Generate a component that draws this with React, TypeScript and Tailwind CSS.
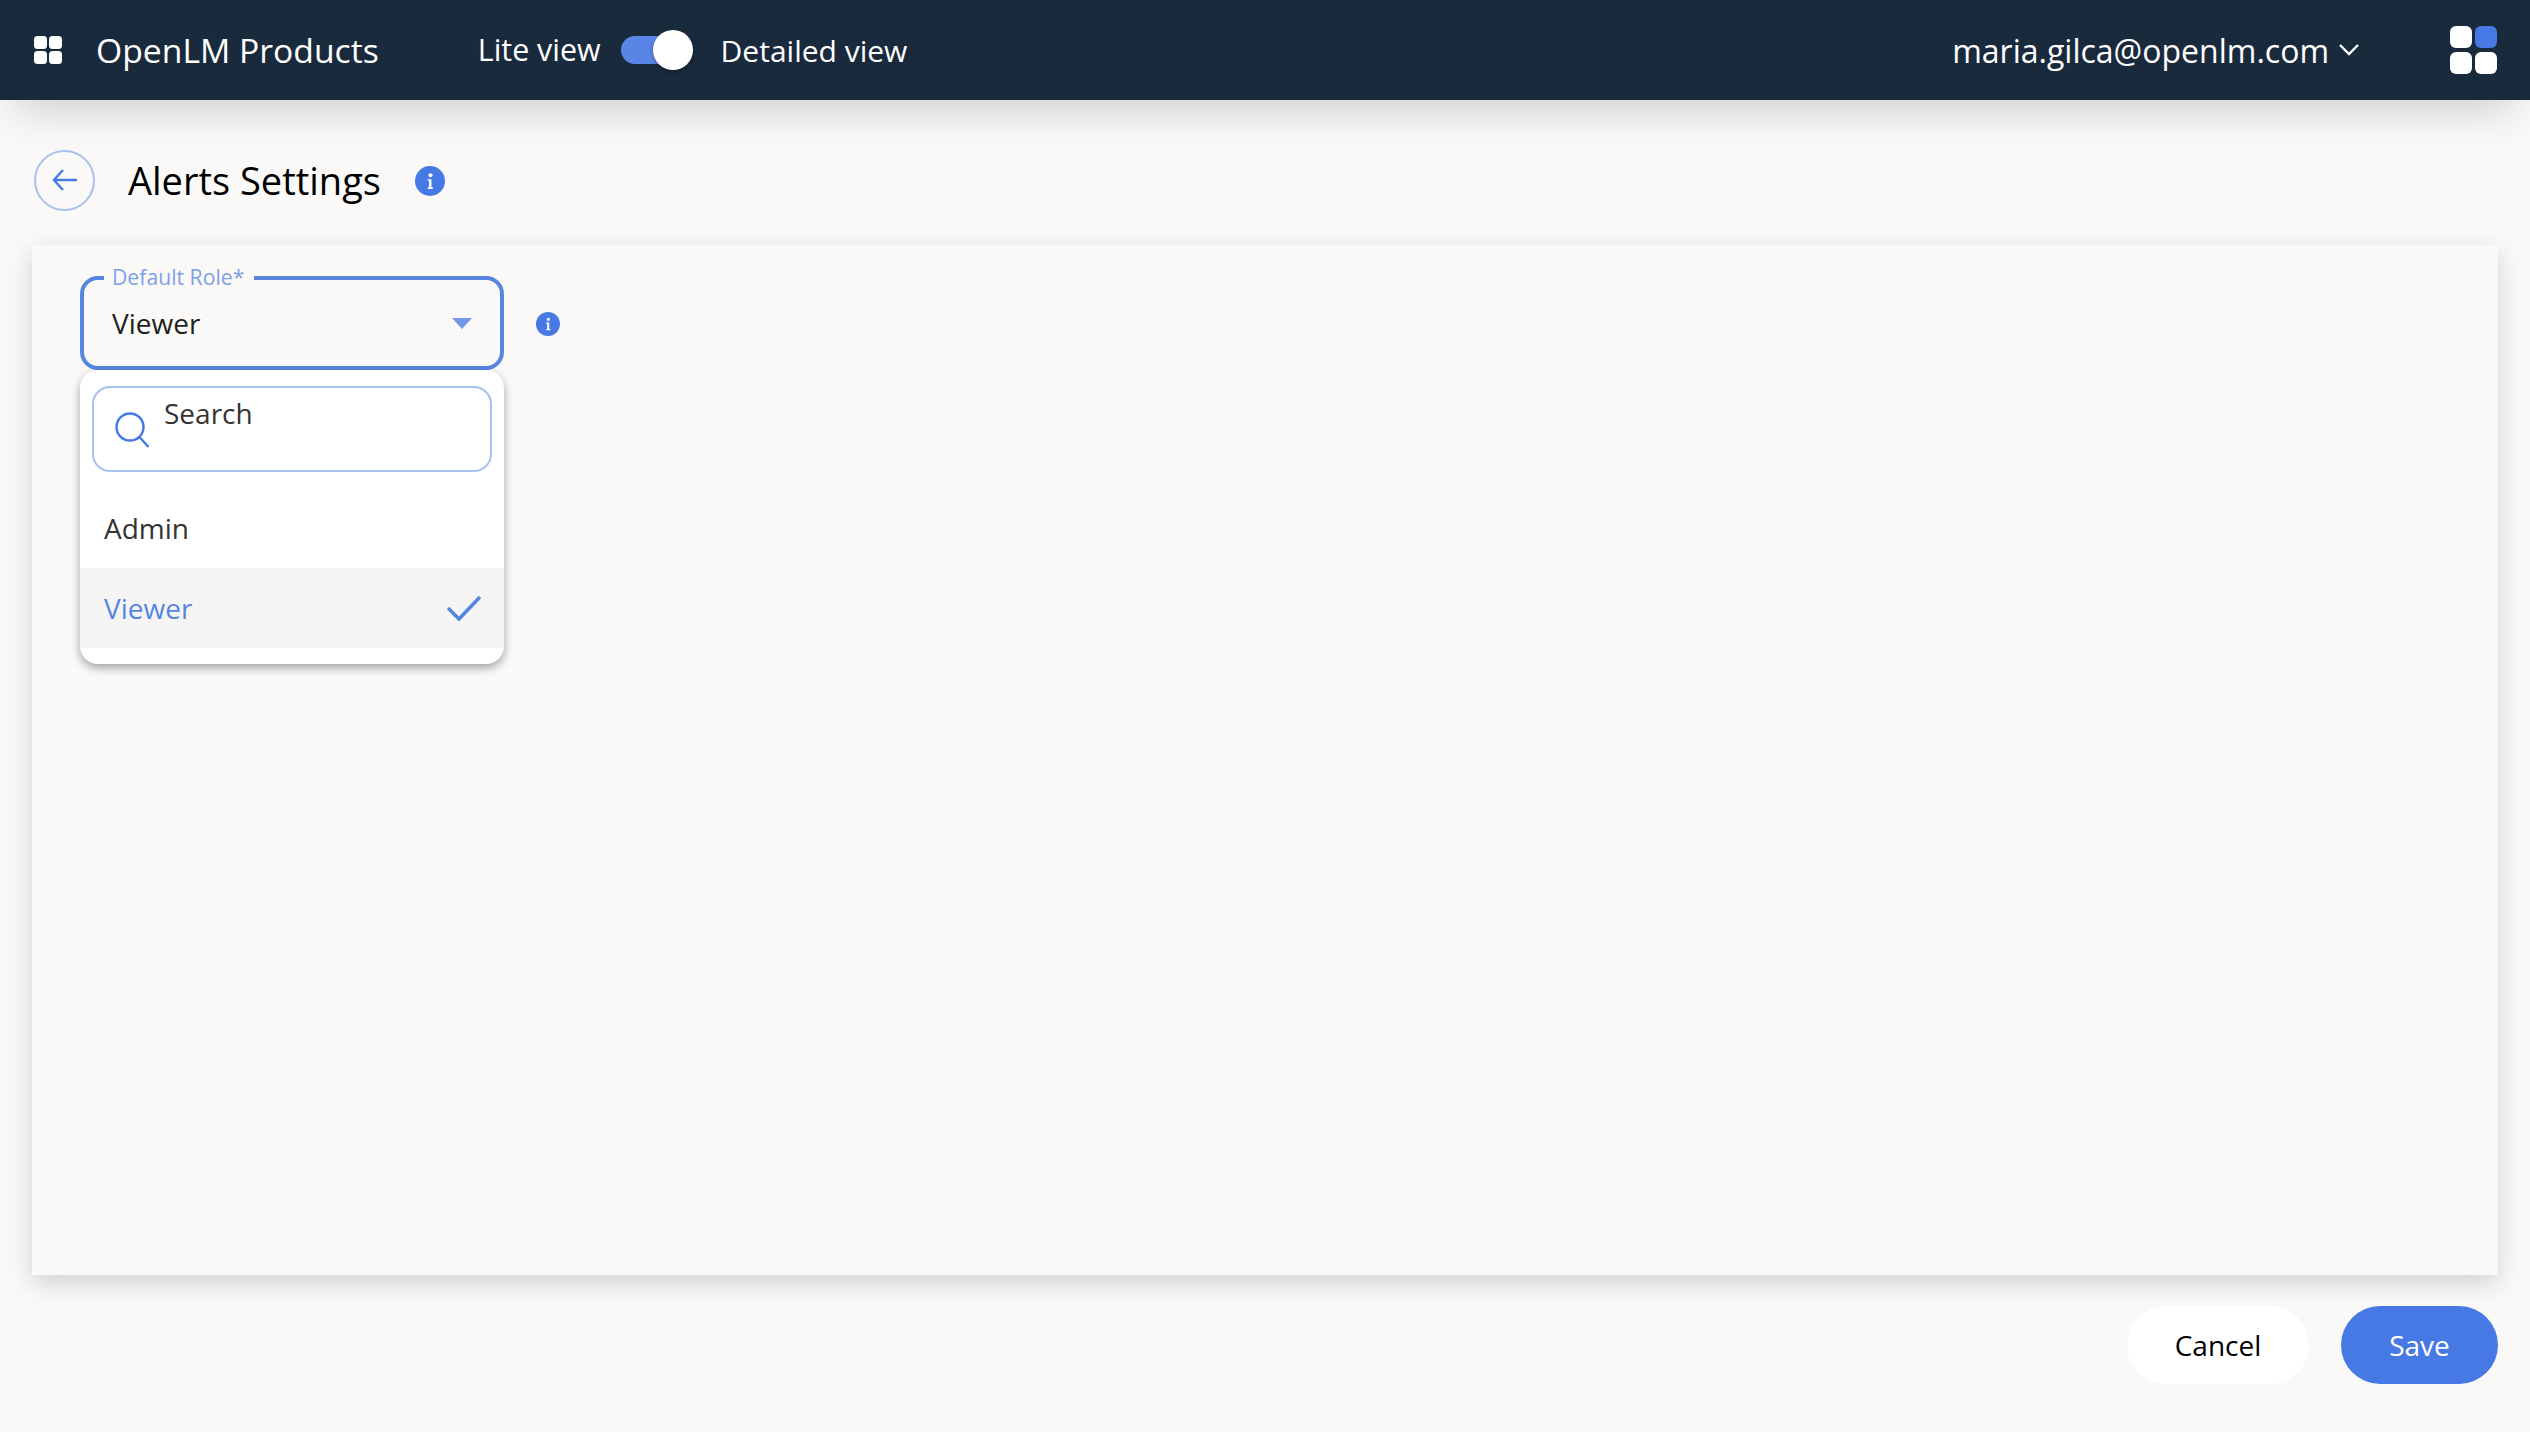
import React from "react";

const font = { fontFamily: '"Open Sans", "Noto Sans", sans-serif' };

function InfoIcon({ size }: { size: number }) {
  return (
    <svg width={size} height={size} viewBox="0 0 30 30" className="shrink-0">
      <circle cx="15" cy="15" r="15" fill="#4779e4" />
      <circle cx="15.5" cy="9.2" r="2" fill="#fff" />
      <path d="M12.5 13.2h4v7.2c0 .8.4 1.1 1.6 1.1v1.4h-5.4v-1.4c.9 0 1.3-.3 1.3-1v-5.1c0-.6-.4-.9-1.5-.9z" fill="#fff" />
    </svg>
  );
}

export default function App() {
  return (
    <div className="w-[2530px] h-[1432px] bg-[#faf9f7] flex flex-col overflow-hidden" style={font}>
      <header className="h-[100px] shrink-0 bg-[#1a2a3d] flex items-center pl-[34px] pr-[33px] text-white shadow-[0_28px_40px_-16px_rgba(0,0,0,0.16)] relative z-10">
        <svg width="28" height="28" viewBox="0 0 28 28" className="shrink-0">
          <rect x="0" y="0" width="13" height="13" rx="3.5" fill="#fff" />
          <rect x="15" y="0" width="13" height="13" rx="3.5" fill="#fff" />
          <rect x="0" y="15" width="13" height="13" rx="3.5" fill="#fff" />
          <rect x="15" y="15" width="13" height="13" rx="3.5" fill="#fff" />
        </svg>
        <span className="ml-[34px] mt-[1px] text-[33.7px] leading-none">OpenLM Products</span>
        <span className="ml-[99px] mt-[1px] text-[30.4px] leading-none">Lite view</span>
        <div className="ml-[20px] relative w-[72px] h-[40px] flex items-center">
          <div className="w-[60px] h-[28px] rounded-full bg-[#5885e6]" />
          <div className="absolute right-0 top-0 w-[40px] h-[40px] rounded-full bg-white shadow-[0_2px_4px_rgba(0,0,0,0.3)]" />
        </div>
        <span className="ml-[28px] mt-[1px] text-[30px] leading-none">Detailed view</span>
        <span className="ml-auto mt-[1px] text-[32px] leading-none">maria.gilca@openlm.com</span>
        <svg width="22" height="14" viewBox="0 0 22 14" className="ml-[9px] mr-[90px] shrink-0" fill="none" stroke="#fff" strokeWidth="2.4">
          <path d="M2 2l9 9 9-9" />
        </svg>
        <svg width="47" height="48" viewBox="0 0 47 48" className="shrink-0">
          <rect x="0" y="0" width="22" height="22" rx="6" fill="#fff" />
          <rect x="25" y="0" width="22" height="22" rx="6" fill="#4779e4" />
          <rect x="0" y="26" width="22" height="22" rx="6" fill="#fff" />
          <rect x="25" y="26" width="22" height="22" rx="6" fill="#fff" />
        </svg>
      </header>

      <main className="flex-1 flex flex-col px-[32px]">
        <div className="h-[145px] shrink-0 flex items-center pt-[15px] pl-[2px]">
          <div className="w-[61px] h-[61px] rounded-full border-2 border-[#a9c0ef] flex items-center justify-center shrink-0">
            <svg width="26" height="24" viewBox="0 0 26 24" fill="none" stroke="#4779e4" strokeWidth="2.4">
              <path d="M25 12H2M11 2L2 12l9 10" />
            </svg>
          </div>
          <h1 className="ml-[33px] text-[38px] leading-none text-black font-normal">Alerts Settings</h1>
          <div className="ml-[34px] mt-[1px]"><InfoIcon size={30} /></div>
        </div>

        <section className="h-[1030px] shrink-0 bg-[#faf9f7] shadow-[0_8px_24px_rgba(0,0,0,0.16)] pt-[31px] pl-[48px]">
          <div className="flex items-center">
            <div className="relative w-[424px] h-[94px] border-[4px] border-[#5885e0] rounded-[18px] flex items-center justify-between pl-[28px] pr-[28px]">
              <span className="absolute -top-[17px] left-[20px] pl-[8px] pr-[10px] bg-[#faf9f7] text-[21.2px] leading-[28px] text-[#7ea0ea]">Default Role*</span>
              <span className="text-[28px] leading-none text-[#1f1f1f]">Viewer</span>
              <svg width="20" height="11" viewBox="0 0 20 11"><path d="M0 0h20L10 11z" fill="#7097e8" /></svg>

              <div className="absolute left-[-4px] top-[90px] w-[424px] h-[294px] bg-white rounded-[18px] shadow-[0_4px_10px_rgba(0,0,0,0.35)] z-20 pt-[16px] overflow-hidden">
                <div className="mx-[12px] w-[400px] h-[86px] border-2 border-[#a9c0ef] rounded-[18px] flex items-start pl-[21px]">
                  <svg width="36" height="36" viewBox="0 0 36 36" fill="none" stroke="#4779e4" strokeWidth="2.4" className="mt-[24px] shrink-0">
                    <circle cx="15" cy="15" r="13.5" />
                    <path d="M24.5 25l9 10" />
                  </svg>
                  <span className="ml-[13px] mt-[5px] text-[28px] leading-[40px] text-[#333]">Search</span>
                </div>
                <div className="h-[96px] flex items-center pl-[24px] text-[28px] text-[#333]">
                  <span className="mt-[16px]">Admin</span>
                </div>
                <div className="h-[80px] bg-[#f5f5f5] flex items-center justify-between pl-[24px] pr-[23px] text-[28px] text-[#5885e0]">
                  <span>Viewer</span>
                  <svg width="34" height="26" viewBox="0 0 34 26" fill="none" stroke="#5885e0" strokeWidth="3.6"><path d="M1 13l11 11L33 2" /></svg>
                </div>
              </div>
            </div>
            <div className="ml-[32px] mt-[2px]"><InfoIcon size={24} /></div>
          </div>
        </section>

        <div className="flex justify-end gap-[32px] mt-[31px]">
          <button className="w-[182px] h-[78px] rounded-full bg-white text-black text-[28px]">Cancel</button>
          <button className="w-[157px] h-[78px] rounded-full bg-[#4779e4] text-white text-[28px]">Save</button>
        </div>
      </main>
    </div>
  );
}
